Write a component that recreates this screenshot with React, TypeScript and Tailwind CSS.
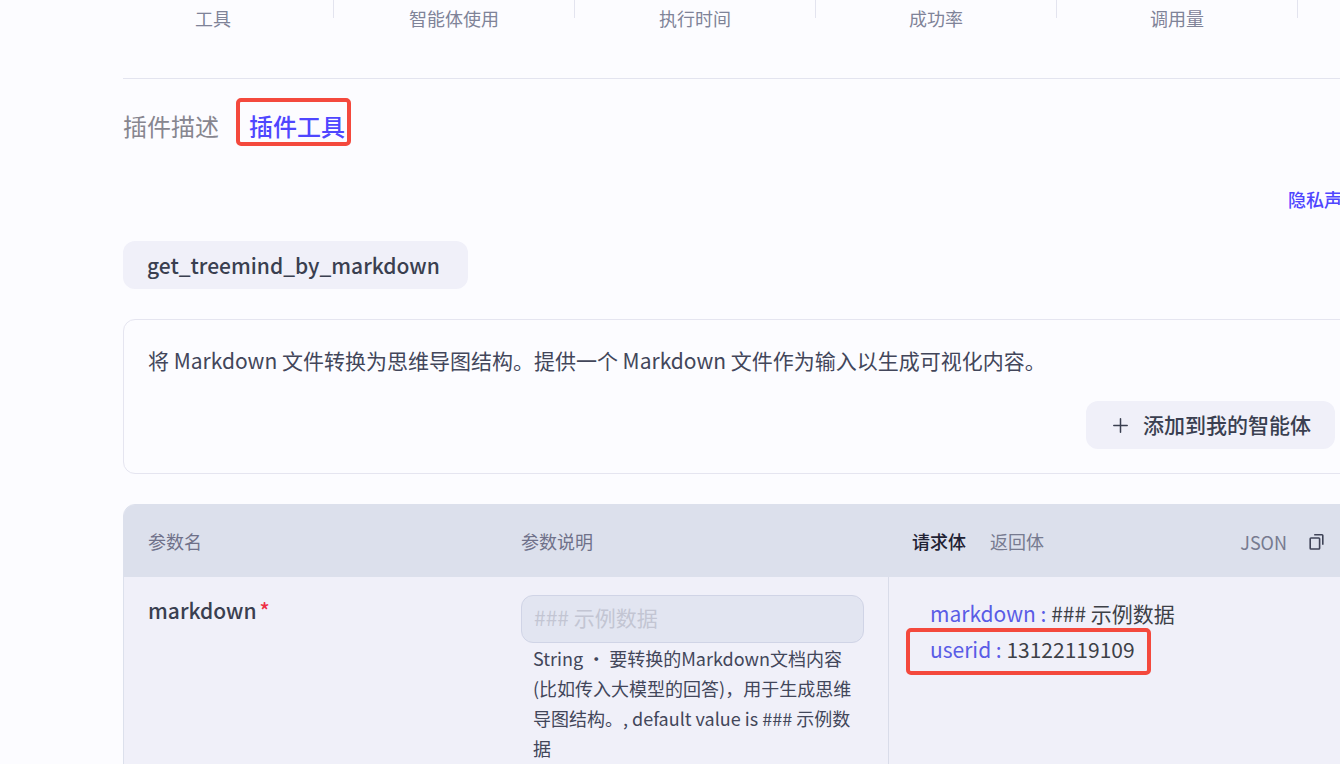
import React, { useState } from 'react';

const STATS = ['工具', '智能体使用', '执行时间', '成功率', '调用量'];

const PARAMS = [
  {
    name: 'markdown',
    required: true,
    placeholder: '### 示例数据',
    desc: 'String ・ 要转换的Markdown文档内容(比如传入大模型的回答)，用于生成思维导图结构。, default value is ### 示例数据',
  },
];

const REQUEST_BODY = [
  { key: 'markdown', value: '### 示例数据', marked: false },
  { key: 'userid', value: '13122119109', marked: true },
];

function CopyIcon() {
  return (
    <svg width="16" height="18" viewBox="0 0 16 18" fill="none" stroke="currentColor" strokeWidth="1.6">
      <rect x="1.2" y="5" width="9.4" height="11" rx="0.8" />
      <path d="M5.2 1.8h7.8a0.8 0.8 0 0 1 0.8 0.8v9.2" />
    </svg>
  );
}

function PlusIcon() {
  return (
    <svg width="20" height="20" viewBox="0 0 20 20" fill="none" stroke="currentColor" strokeWidth="1.5" strokeLinecap="round">
      <path d="M10.5 3.8v13.4M3.8 10.5h13.4" />
    </svg>
  );
}

function StatsBar() {
  return (
    <div className="-ml-[31px] flex pb-12">
      {STATS.map((label) => (
        <div key={label} className="flex w-[242px] shrink-0 -mr-px">
          <p className="flex-1 pt-[6px] pl-px text-center text-lg leading-6 text-[#7f8398]">{label}</p>
          <span className="h-[18px] w-px bg-[#e3e4ef]" />
        </div>
      ))}
    </div>
  );
}

function ParamTable() {
  return (
    <table className="min-w-0 flex-1 table-fixed border-collapse text-left">
      <thead>
        <tr className="h-[72px] bg-[#dce0ec] text-lg text-[#6f7189]">
          <th className="w-[373px] pl-6 font-normal">参数名</th>
          <th className="pl-6 font-normal">参数说明</th>
        </tr>
      </thead>
      <tbody>
        {PARAMS.map((p) => (
          <tr key={p.name} className="align-top">
            <td className="pt-[18px] pl-6 text-[21px] leading-[30px] font-medium text-[#3a3f50]">
              <label htmlFor={p.name}>{p.name}</label>
              {p.required && <span className="ml-[3px] text-[#ee2f45]">*</span>}
            </td>
            <td className="pt-[18px] pr-6 pl-6">
              <input
                id={p.name}
                placeholder={p.placeholder}
                className="h-12 w-full rounded-xl border border-[#d0d4e6] bg-[#e2e5f1] px-3 pb-1 text-[21px] outline-none placeholder:text-[#c3c5d3]"
              />
              <p className="px-3 pb-6 text-lg leading-[30px] text-[#42465a]">{p.desc}</p>
            </td>
          </tr>
        ))}
      </tbody>
    </table>
  );
}

function BodyPanel() {
  const [view, setView] = useState('request');
  return (
    <section className="flex w-[471px] shrink-0 flex-col">
      <header className="flex h-[72px] items-center bg-[#dce0ec] pr-[34px] pl-6 text-lg text-[#777b90]">
        <div className="flex gap-6">
          <button
            onClick={() => setView('request')}
            className={view === 'request' ? 'font-medium text-[#1f2233]' : ''}
          >
            请求体
          </button>
          <button
            onClick={() => setView('response')}
            className={view === 'response' ? 'font-medium text-[#1f2233]' : ''}
          >
            返回体
          </button>
        </div>
        <div className="ml-auto flex items-center gap-[22px] pt-[2px]">
          <span>JSON</span>
          <button aria-label="复制" className="text-[#3f4357]">
            <CopyIcon />
          </button>
        </div>
      </header>
      <div className="flex-1 border-l border-[#d9dce9] px-[41px] py-[18px] text-[21px] leading-9 text-[#3d4047]">
        {REQUEST_BODY.map((row) => (
          <p key={row.key} className="relative w-fit">
            <span className="text-[#5a5ce6]">{row.key} : </span>
            {row.value}
            {row.marked && (
              <span className="pointer-events-none absolute -top-[3px] -right-4 -bottom-2 -left-6 rounded-[5px] border-4 border-[#f4493d]" />
            )}
          </p>
        ))}
      </div>
    </section>
  );
}

export default function App() {
  return (
    <div
      className="h-screen overflow-hidden bg-[#fcfcff] pl-[123px] text-[#42465a]"
      style={{ fontFamily: '"Noto Sans CJK SC", sans-serif' }}
    >
      <main className="-mr-5">
        <StatsBar />

        <nav className="flex gap-[30px] border-t border-[#e3e4ef] pt-[29px] text-2xl leading-9">
          <button className="text-[#87868f]">插件描述</button>
          <button className="relative font-medium text-[#4f46ff]">
            插件工具
            <span className="pointer-events-none absolute -top-[10px] -right-[6px] -bottom-[2px] -left-[13px] rounded-[5px] border-4 border-[#f4493d]" />
          </button>
        </nav>

        <div className="mt-[41px] flex justify-end">
          <a href="#privacy" className="text-lg leading-7 font-medium text-[#4f46ff]">
            隐私声明
          </a>
        </div>

        <h2 className="mt-7 w-fit rounded-xl bg-[#f0f0f9] pr-7 pl-6 text-[21px] leading-[48px] font-medium text-[#3a3f50]">
          get_treemind_by_markdown
        </h2>

        <section className="mt-[30px] rounded-xl border border-[#e5e5f0] px-6 pt-[22px] pb-6">
          <p className="text-[21px] leading-9">
            将 Markdown 文件转换为思维导图结构。提供一个 Markdown 文件作为输入以生成可视化内容。
          </p>
          <div className="mt-[23px] flex justify-end">
            <button className="flex h-12 items-center gap-[13px] rounded-xl bg-[#f0f0f9] px-6 text-[21px] font-medium text-[#3a3f50]">
              <PlusIcon />
              添加到我的智能体
            </button>
          </div>
        </section>

        <div className="mt-[30px] flex overflow-hidden rounded-t-xl border border-[#dce0ec] bg-[#f0f0f9]">
          <ParamTable />
          <BodyPanel />
        </div>
      </main>
    </div>
  );
}
